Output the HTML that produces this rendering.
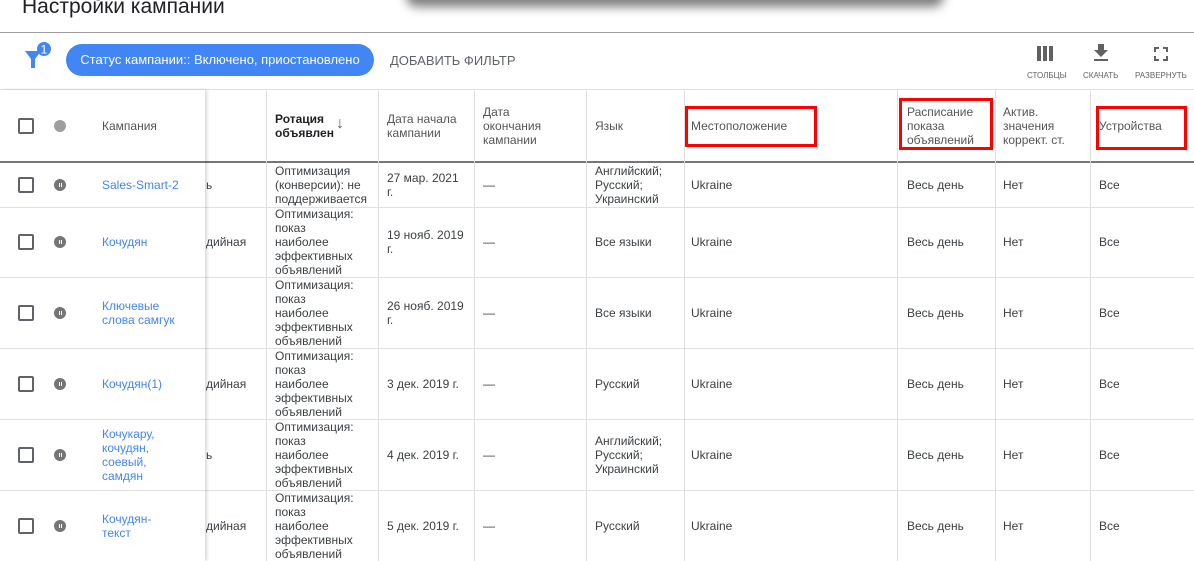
<!DOCTYPE html>
<html><head><meta charset="utf-8"><style>
*{box-sizing:border-box;margin:0;padding:0}
body{width:1194px;height:561px;overflow:hidden;background:#fff;font-family:"Liberation Sans",Arial,sans-serif;position:relative;color:#3c4043}
.abs{position:absolute}
.t{font-size:12px;line-height:14px;color:#3c4043}
.h{font-size:12px;line-height:14px;color:#5f6368;font-weight:bold;-webkit-text-stroke:0}
.h{font-weight:normal;color:#555}
.vl{position:absolute;top:90px;width:1px;height:471px;background:#e0e0e0}
.hl{position:absolute;left:0;width:1194px;height:1px;background:#e0e0e0}
.cb{position:absolute;left:18px;width:16px;height:16px;border:2px solid #5f6368;border-radius:2px}
.pz{position:absolute;left:54px;width:12px;height:12px;border-radius:50%;background:#757575}
.pz:before,.pz:after{content:"";position:absolute;top:4px;width:1px;height:4px;background:#fff}
.pz:before{left:4.5px}.pz:after{left:6.5px}
.lk{color:#4285f4;font-size:12px;line-height:14px}
.red{position:absolute;border:3px solid #f00}
</style></head><body>
<div class="abs" style="left:22px;top:-5px;font-size:21px;color:#202124">Настройки кампании</div>
<div class="abs" style="left:410px;top:-14px;width:530px;height:14px;border-radius:8px;box-shadow:0 3px 10px 4px rgba(0,0,0,.5);background:#fff"></div>
<div class="abs" style="left:0;top:32px;width:1194px;height:1px;background:#9e9e9e"></div>
<svg class="abs" style="left:24px;top:42px" width="28" height="28" viewBox="0 0 28 28"><path d="M1 9h16l-6 8v9h-4v-9z" fill="#4285f4"/><circle cx="20" cy="7" r="7" fill="#4285f4"/><text x="20" y="11.5" font-size="12" fill="#fff" text-anchor="middle" font-family="Liberation Sans">1</text></svg>
<div class="abs" style="left:66px;top:44px;width:308px;height:32px;border-radius:16px;background:#4285f4;color:#fff;font-size:13px;line-height:32px;text-align:center">Статус кампании:: Включено, приостановлено</div>
<div class="abs" style="left:390px;top:53px;font-size:13px;color:#5f6368">ДОБАВИТЬ ФИЛЬТР</div>
<svg class="abs" style="left:1037px;top:46px" width="20" height="16"><rect x="0" y="0" width="4" height="15" fill="#616161"/><rect x="6" y="0" width="4" height="15" fill="#616161"/><rect x="12" y="0" width="4" height="15" fill="#616161"/></svg>
<svg class="abs" style="left:1093px;top:44px" width="16" height="18"><path d="M5 0h6v6h4l-7 7-7-7h4z" fill="#616161"/><rect x="1" y="15" width="14" height="2" fill="#616161"/></svg>
<svg class="abs" style="left:1154px;top:47px" width="14" height="14" fill="none" stroke="#616161" stroke-width="2"><path d="M1 5V1h4M9 1h4v4M13 9v4H9M5 13H1V9"/></svg>
<div class="abs" style="left:1027px;top:71px;font-size:8px;color:#5f6368">СТОЛБЦЫ</div>
<div class="abs" style="left:1083px;top:71px;font-size:8px;color:#5f6368">СКАЧАТЬ</div>
<div class="abs" style="left:1135px;top:71px;font-size:8px;color:#5f6368">РАЗВЕРНУТЬ</div>
<div class="hl" style="top:89px"></div>
<div class="abs" style="left:0;top:161px;width:1194px;height:2px;background:#757575"></div>
<div class="hl" style="top:207px"></div><div class="hl" style="top:277px"></div><div class="hl" style="top:348px"></div><div class="hl" style="top:419px"></div><div class="hl" style="top:490px"></div>
<div class="vl" style="left:266px"></div><div class="vl" style="left:378px"></div><div class="vl" style="left:474px"></div><div class="vl" style="left:586px"></div><div class="vl" style="left:684px"></div><div class="vl" style="left:897px"></div><div class="vl" style="left:995px"></div><div class="vl" style="left:1090px"></div>
<div class="abs" style="left:0;top:90px;width:205px;height:471px;background:#fff;box-shadow:2px 0 3px rgba(0,0,0,.15)"></div>
<div class="abs" style="left:0;top:161px;width:205px;height:2px;background:#757575"></div>
<div class="hl" style="top:207px;width:205px"></div><div class="hl" style="top:277px;width:205px"></div><div class="hl" style="top:348px;width:205px"></div><div class="hl" style="top:419px;width:205px"></div><div class="hl" style="top:490px;width:205px"></div>
<div class="cb" style="top:118px"></div><div class="abs" style="left:54px;top:120px;width:12px;height:12px;border-radius:50%;background:#9e9e9e"></div>
<div class="abs h" style="left:102px;top:119px">Кампания</div>
<div class="abs t" style="left:275px;top:112px;font-weight:bold;color:#202124">Ротация<br>объявлен</div>
<div class="abs" style="left:336px;top:116px;font-size:16px;line-height:16px;color:#5f6368">↓</div>
<div class="abs h" style="left:387px;top:112px">Дата начала<br>кампании</div>
<div class="abs h" style="left:483px;top:105px">Дата<br>окончания<br>кампании</div>
<div class="abs h" style="left:595px;top:119px">Язык</div>
<div class="abs h" style="left:691px;top:119px">Местоположение</div>
<div class="abs h" style="left:907px;top:105px">Расписание<br>показа<br>объявлений</div>
<div class="abs h" style="left:1003px;top:105px">Актив.<br>значения<br>коррект. ст.</div>
<div class="abs h" style="left:1099px;top:119px">Устройства</div>
<div class="red" style="left:685px;top:106px;width:132px;height:41px"></div>
<div class="red" style="left:899px;top:98px;width:94px;height:52px"></div>
<div class="red" style="left:1096px;top:106px;width:91px;height:44px"></div>

<div class="cb" style="top:177px"></div><div class="pz" style="top:179px"></div><div class="abs lk" style="left:102px;top:178px">Sales-Smart-2</div>
<div class="abs t" style="left:206px;top:178px">ь</div>
<div class="abs t" style="left:275px;top:164px">Оптимизация<br>(конверсии): не<br>поддерживается</div>
<div class="abs t" style="left:387px;top:171px">27 мар. 2021<br>г.</div>
<div class="abs t" style="left:483px;top:178px">—</div>
<div class="abs t" style="left:595px;top:164px">Английский;<br>Русский;<br>Украинский</div>
<div class="abs t" style="left:691px;top:178px">Ukraine</div><div class="abs t" style="left:907px;top:178px">Весь день</div><div class="abs t" style="left:1003px;top:178px">Нет</div><div class="abs t" style="left:1099px;top:178px">Все</div>

<div class="cb" style="top:234px"></div><div class="pz" style="top:236px"></div><div class="abs lk" style="left:102px;top:235px">Кочудян</div>
<div class="abs t" style="left:206px;top:235px">дийная</div>
<div class="abs t" style="left:275px;top:207px">Оптимизация:<br>показ<br>наиболее<br>эффективных<br>объявлений</div>
<div class="abs t" style="left:387px;top:228px">19 нояб. 2019<br>г.</div>
<div class="abs t" style="left:483px;top:235px">—</div><div class="abs t" style="left:595px;top:235px">Все языки</div>
<div class="abs t" style="left:691px;top:235px">Ukraine</div><div class="abs t" style="left:907px;top:235px">Весь день</div><div class="abs t" style="left:1003px;top:235px">Нет</div><div class="abs t" style="left:1099px;top:235px">Все</div>

<div class="cb" style="top:305px"></div><div class="pz" style="top:307px"></div><div class="abs lk" style="left:102px;top:299px">Ключевые<br>слова самгук</div>
<div class="abs t" style="left:275px;top:278px">Оптимизация:<br>показ<br>наиболее<br>эффективных<br>объявлений</div>
<div class="abs t" style="left:387px;top:299px">26 нояб. 2019<br>г.</div>
<div class="abs t" style="left:483px;top:306px">—</div><div class="abs t" style="left:595px;top:306px">Все языки</div>
<div class="abs t" style="left:691px;top:306px">Ukraine</div><div class="abs t" style="left:907px;top:306px">Весь день</div><div class="abs t" style="left:1003px;top:306px">Нет</div><div class="abs t" style="left:1099px;top:306px">Все</div>

<div class="cb" style="top:376px"></div><div class="pz" style="top:378px"></div><div class="abs lk" style="left:102px;top:377px">Кочудян(1)</div>
<div class="abs t" style="left:206px;top:377px">дийная</div>
<div class="abs t" style="left:275px;top:349px">Оптимизация:<br>показ<br>наиболее<br>эффективных<br>объявлений</div>
<div class="abs t" style="left:387px;top:377px">3 дек. 2019 г.</div>
<div class="abs t" style="left:483px;top:377px">—</div><div class="abs t" style="left:595px;top:377px">Русский</div>
<div class="abs t" style="left:691px;top:377px">Ukraine</div><div class="abs t" style="left:907px;top:377px">Весь день</div><div class="abs t" style="left:1003px;top:377px">Нет</div><div class="abs t" style="left:1099px;top:377px">Все</div>

<div class="cb" style="top:447px"></div><div class="pz" style="top:449px"></div><div class="abs lk" style="left:102px;top:427px">Кочукару,<br>кочудян,<br>соевый,<br>самдян</div>
<div class="abs t" style="left:206px;top:448px">ь</div>
<div class="abs t" style="left:275px;top:420px">Оптимизация:<br>показ<br>наиболее<br>эффективных<br>объявлений</div>
<div class="abs t" style="left:387px;top:448px">4 дек. 2019 г.</div>
<div class="abs t" style="left:483px;top:448px">—</div>
<div class="abs t" style="left:595px;top:434px">Английский;<br>Русский;<br>Украинский</div>
<div class="abs t" style="left:691px;top:448px">Ukraine</div><div class="abs t" style="left:907px;top:448px">Весь день</div><div class="abs t" style="left:1003px;top:448px">Нет</div><div class="abs t" style="left:1099px;top:448px">Все</div>

<div class="cb" style="top:518px"></div><div class="pz" style="top:520px"></div><div class="abs lk" style="left:102px;top:512px">Кочудян-<br>текст</div>
<div class="abs t" style="left:206px;top:519px">дийная</div>
<div class="abs t" style="left:275px;top:491px">Оптимизация:<br>показ<br>наиболее<br>эффективных<br>объявлений</div>
<div class="abs t" style="left:387px;top:519px">5 дек. 2019 г.</div>
<div class="abs t" style="left:483px;top:519px">—</div><div class="abs t" style="left:595px;top:519px">Русский</div>
<div class="abs t" style="left:691px;top:519px">Ukraine</div><div class="abs t" style="left:907px;top:519px">Весь день</div><div class="abs t" style="left:1003px;top:519px">Нет</div><div class="abs t" style="left:1099px;top:519px">Все</div>
</body></html>
